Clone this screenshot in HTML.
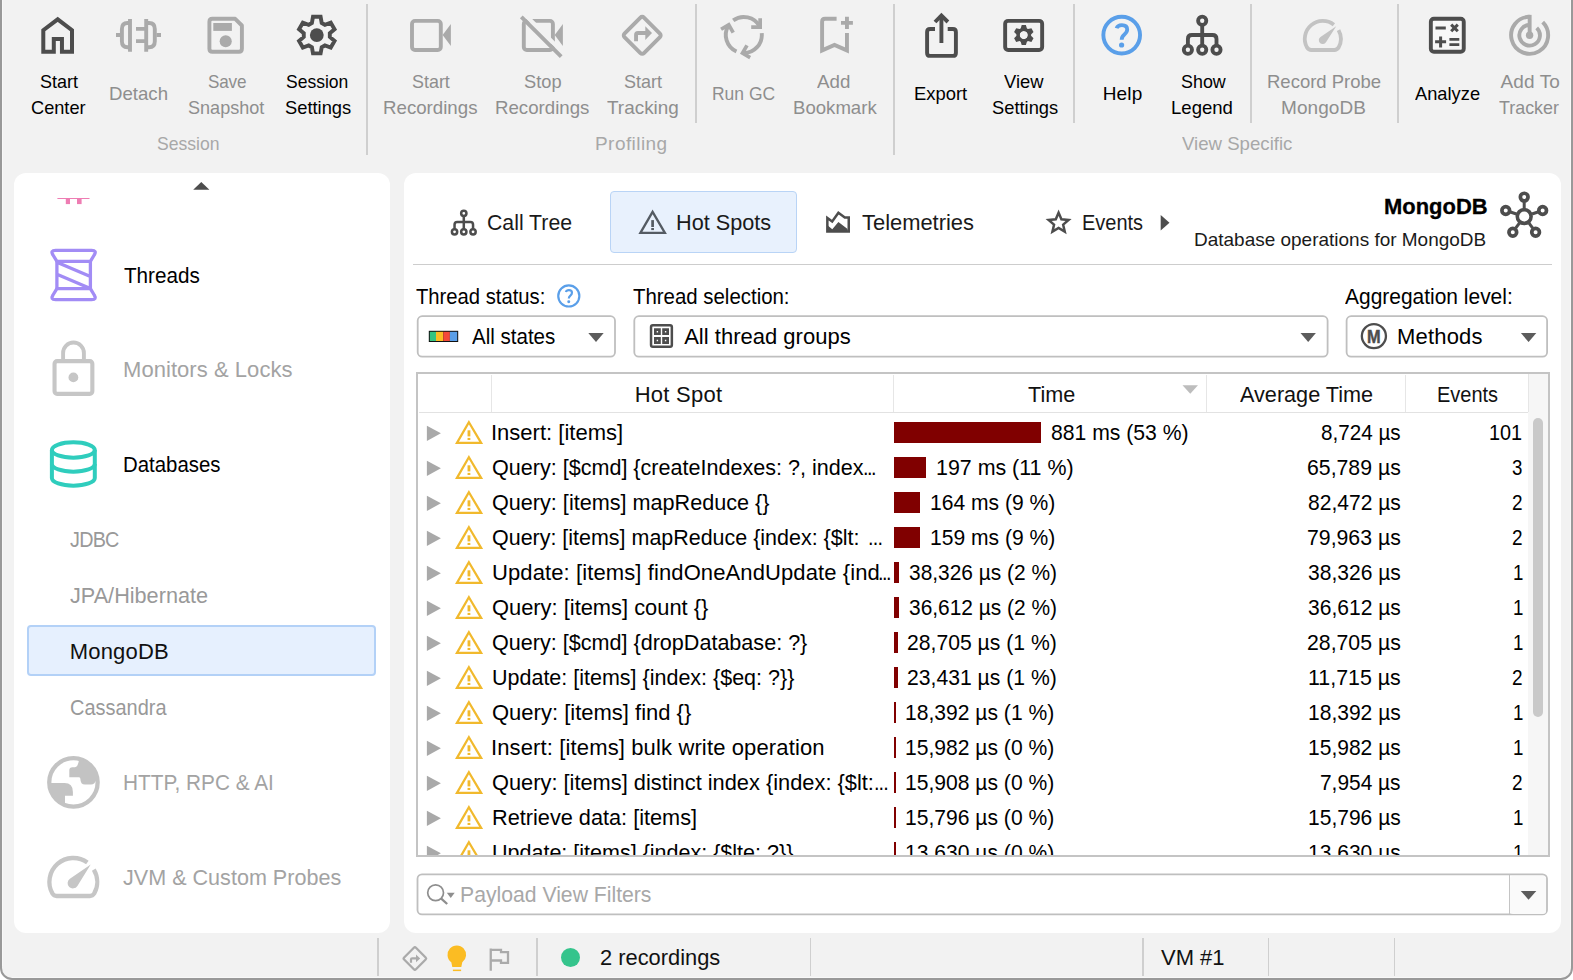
<!DOCTYPE html>
<html lang="en"><head><meta charset="utf-8"><title>JProfiler - MongoDB Hot Spots</title>
<style>
html,body{margin:0;padding:0;}
body{width:1573px;height:980px;overflow:hidden;background:#fff;font-family:"Liberation Sans", sans-serif;position:relative;}
.a{position:absolute;box-sizing:border-box;}
.t{position:absolute;white-space:pre;line-height:1;color:#000;transform-origin:0 0;}
</style></head><body>
<div class="a" style="left:0px;top:-20px;width:1573px;height:1000px;background:#f2f2f2;border:2px solid #999;border-radius:12px;"></div>
<div class="a" style="left:2px;top:0px;width:1px;height:966px;background:#f8f8f8;"></div>
<div class="a" style="left:1570px;top:0px;width:1px;height:966px;background:#f8f8f8;"></div>
<div class="a" style="left:12px;top:977px;width:1549px;height:1px;background:#f8f8f8;"></div>
<div class="a" style="left:366px;top:4px;width:2px;height:151px;background:#cfcfcf;"></div>
<div class="a" style="left:695px;top:4px;width:2px;height:119px;background:#cfcfcf;"></div>
<div class="a" style="left:893px;top:4px;width:2px;height:151px;background:#cfcfcf;"></div>
<div class="a" style="left:1073px;top:4px;width:2px;height:119px;background:#cfcfcf;"></div>
<div class="a" style="left:1250px;top:4px;width:2px;height:119px;background:#cfcfcf;"></div>
<div class="a" style="left:1397px;top:4px;width:2px;height:119px;background:#cfcfcf;"></div>
<div class="a" style="left:14px;top:173px;width:375.6px;height:760px;background:#fff;border-radius:12px;"></div>
<div class="a" style="left:404px;top:173px;width:1157px;height:760px;background:#fff;border-radius:12px;"></div>
<div class="a" style="left:27px;top:625px;width:349px;height:51px;background:#e6f0fe;border:2px solid #b3d1f7;border-radius:4px;"></div>
<div class="a" style="left:610px;top:190.5px;width:187px;height:62.5px;background:#e8f1fd;border:1px solid #b9d4f6;border-radius:4px;"></div>
<div class="a" style="left:413px;top:264px;width:1139px;height:1px;background:#cdcdcd;"></div>
<svg class="a" style="left:0;top:0" width="1573" height="980"><rect x="417.7" y="316.2" width="197.3" height="40.5" rx="4.5" fill="#fff" stroke="#bfbfbf" stroke-width="1.8"/></svg>
<svg class="a" style="left:0;top:0" width="1573" height="980"><rect x="634.3" y="316.2" width="693.3" height="40.5" rx="4.5" fill="#fff" stroke="#bfbfbf" stroke-width="1.8"/></svg>
<svg class="a" style="left:0;top:0" width="1573" height="980"><rect x="1346.6" y="316.2" width="200.5" height="40.5" rx="4.5" fill="#fff" stroke="#bfbfbf" stroke-width="1.8"/></svg>
<div class="a" style="left:416px;top:372px;width:1133.5px;height:485px;background:#fff;border:2px solid #c4c4c4;"></div>
<div class="a" style="left:419px;top:412px;width:1109px;height:1px;background:#e2e2e2;"></div>
<div class="a" style="left:490.5px;top:375px;width:1px;height:37px;background:#e6e6e6;"></div>
<div class="a" style="left:893px;top:375px;width:1px;height:37px;background:#e6e6e6;"></div>
<div class="a" style="left:1206px;top:375px;width:1px;height:37px;background:#e6e6e6;"></div>
<div class="a" style="left:1404.5px;top:375px;width:1px;height:37px;background:#e6e6e6;"></div>
<div class="a" style="left:1528px;top:374px;width:19.5px;height:481px;background:#f6f6f6;"></div>
<div class="a" style="left:1528px;top:374px;width:1px;height:38px;background:#e6e6e6;"></div>
<div class="a" style="left:1533px;top:417.5px;width:10px;height:299px;background:#c9c9c9;border-radius:5px;"></div>
<svg class="a" style="left:426px;top:425px" width="16" height="17" viewBox="0 0 16 17"><path d="M0.9 0.7 L14.9 8.35 L0.9 16 Z" fill="#a9a9a9"/></svg>
<svg class="a" style="left:453px;top:418px" width="32" height="28" viewBox="0 0 32 28"><path d="M15.9 4.25 L28.15 24.9 H3.95 Z" fill="none" stroke="#f1b92d" stroke-width="2.25" stroke-linejoin="miter"/><rect x="14.55" y="12.3" width="2.8" height="6.1" fill="#f1b92d"/><rect x="14.55" y="19.9" width="2.8" height="2.1" fill="#f1b92d"/></svg>
<div class="a" style="left:894px;top:421.8px;width:147px;height:21px;background:#800000;"></div>
<svg class="a" style="left:426px;top:460px" width="16" height="17" viewBox="0 0 16 17"><path d="M0.9 0.7 L14.9 8.35 L0.9 16 Z" fill="#a9a9a9"/></svg>
<svg class="a" style="left:453px;top:453px" width="32" height="28" viewBox="0 0 32 28"><path d="M15.9 4.25 L28.15 24.9 H3.95 Z" fill="none" stroke="#f1b92d" stroke-width="2.25" stroke-linejoin="miter"/><rect x="14.55" y="12.3" width="2.8" height="6.1" fill="#f1b92d"/><rect x="14.55" y="19.9" width="2.8" height="2.1" fill="#f1b92d"/></svg>
<div class="a" style="left:894px;top:456.8px;width:32px;height:21px;background:#800000;"></div>
<svg class="a" style="left:426px;top:495px" width="16" height="17" viewBox="0 0 16 17"><path d="M0.9 0.7 L14.9 8.35 L0.9 16 Z" fill="#a9a9a9"/></svg>
<svg class="a" style="left:453px;top:488px" width="32" height="28" viewBox="0 0 32 28"><path d="M15.9 4.25 L28.15 24.9 H3.95 Z" fill="none" stroke="#f1b92d" stroke-width="2.25" stroke-linejoin="miter"/><rect x="14.55" y="12.3" width="2.8" height="6.1" fill="#f1b92d"/><rect x="14.55" y="19.9" width="2.8" height="2.1" fill="#f1b92d"/></svg>
<div class="a" style="left:894px;top:491.8px;width:26px;height:21px;background:#800000;"></div>
<svg class="a" style="left:426px;top:530px" width="16" height="17" viewBox="0 0 16 17"><path d="M0.9 0.7 L14.9 8.35 L0.9 16 Z" fill="#a9a9a9"/></svg>
<svg class="a" style="left:453px;top:523px" width="32" height="28" viewBox="0 0 32 28"><path d="M15.9 4.25 L28.15 24.9 H3.95 Z" fill="none" stroke="#f1b92d" stroke-width="2.25" stroke-linejoin="miter"/><rect x="14.55" y="12.3" width="2.8" height="6.1" fill="#f1b92d"/><rect x="14.55" y="19.9" width="2.8" height="2.1" fill="#f1b92d"/></svg>
<div class="a" style="left:894px;top:526.8px;width:26px;height:21px;background:#800000;"></div>
<svg class="a" style="left:426px;top:565px" width="16" height="17" viewBox="0 0 16 17"><path d="M0.9 0.7 L14.9 8.35 L0.9 16 Z" fill="#a9a9a9"/></svg>
<svg class="a" style="left:453px;top:558px" width="32" height="28" viewBox="0 0 32 28"><path d="M15.9 4.25 L28.15 24.9 H3.95 Z" fill="none" stroke="#f1b92d" stroke-width="2.25" stroke-linejoin="miter"/><rect x="14.55" y="12.3" width="2.8" height="6.1" fill="#f1b92d"/><rect x="14.55" y="19.9" width="2.8" height="2.1" fill="#f1b92d"/></svg>
<div class="a" style="left:894px;top:561.8px;width:5px;height:21px;background:#800000;"></div>
<svg class="a" style="left:426px;top:600px" width="16" height="17" viewBox="0 0 16 17"><path d="M0.9 0.7 L14.9 8.35 L0.9 16 Z" fill="#a9a9a9"/></svg>
<svg class="a" style="left:453px;top:593px" width="32" height="28" viewBox="0 0 32 28"><path d="M15.9 4.25 L28.15 24.9 H3.95 Z" fill="none" stroke="#f1b92d" stroke-width="2.25" stroke-linejoin="miter"/><rect x="14.55" y="12.3" width="2.8" height="6.1" fill="#f1b92d"/><rect x="14.55" y="19.9" width="2.8" height="2.1" fill="#f1b92d"/></svg>
<div class="a" style="left:894px;top:596.8px;width:5px;height:21px;background:#800000;"></div>
<svg class="a" style="left:426px;top:635px" width="16" height="17" viewBox="0 0 16 17"><path d="M0.9 0.7 L14.9 8.35 L0.9 16 Z" fill="#a9a9a9"/></svg>
<svg class="a" style="left:453px;top:628px" width="32" height="28" viewBox="0 0 32 28"><path d="M15.9 4.25 L28.15 24.9 H3.95 Z" fill="none" stroke="#f1b92d" stroke-width="2.25" stroke-linejoin="miter"/><rect x="14.55" y="12.3" width="2.8" height="6.1" fill="#f1b92d"/><rect x="14.55" y="19.9" width="2.8" height="2.1" fill="#f1b92d"/></svg>
<div class="a" style="left:894px;top:631.8px;width:4px;height:21px;background:#800000;"></div>
<svg class="a" style="left:426px;top:670px" width="16" height="17" viewBox="0 0 16 17"><path d="M0.9 0.7 L14.9 8.35 L0.9 16 Z" fill="#a9a9a9"/></svg>
<svg class="a" style="left:453px;top:663px" width="32" height="28" viewBox="0 0 32 28"><path d="M15.9 4.25 L28.15 24.9 H3.95 Z" fill="none" stroke="#f1b92d" stroke-width="2.25" stroke-linejoin="miter"/><rect x="14.55" y="12.3" width="2.8" height="6.1" fill="#f1b92d"/><rect x="14.55" y="19.9" width="2.8" height="2.1" fill="#f1b92d"/></svg>
<div class="a" style="left:894px;top:666.8px;width:4px;height:21px;background:#800000;"></div>
<svg class="a" style="left:426px;top:705px" width="16" height="17" viewBox="0 0 16 17"><path d="M0.9 0.7 L14.9 8.35 L0.9 16 Z" fill="#a9a9a9"/></svg>
<svg class="a" style="left:453px;top:698px" width="32" height="28" viewBox="0 0 32 28"><path d="M15.9 4.25 L28.15 24.9 H3.95 Z" fill="none" stroke="#f1b92d" stroke-width="2.25" stroke-linejoin="miter"/><rect x="14.55" y="12.3" width="2.8" height="6.1" fill="#f1b92d"/><rect x="14.55" y="19.9" width="2.8" height="2.1" fill="#f1b92d"/></svg>
<div class="a" style="left:894px;top:701.8px;width:2.3px;height:21px;background:#800000;"></div>
<svg class="a" style="left:426px;top:740px" width="16" height="17" viewBox="0 0 16 17"><path d="M0.9 0.7 L14.9 8.35 L0.9 16 Z" fill="#a9a9a9"/></svg>
<svg class="a" style="left:453px;top:733px" width="32" height="28" viewBox="0 0 32 28"><path d="M15.9 4.25 L28.15 24.9 H3.95 Z" fill="none" stroke="#f1b92d" stroke-width="2.25" stroke-linejoin="miter"/><rect x="14.55" y="12.3" width="2.8" height="6.1" fill="#f1b92d"/><rect x="14.55" y="19.9" width="2.8" height="2.1" fill="#f1b92d"/></svg>
<div class="a" style="left:894px;top:736.8px;width:2.3px;height:21px;background:#800000;"></div>
<svg class="a" style="left:426px;top:775px" width="16" height="17" viewBox="0 0 16 17"><path d="M0.9 0.7 L14.9 8.35 L0.9 16 Z" fill="#a9a9a9"/></svg>
<svg class="a" style="left:453px;top:768px" width="32" height="28" viewBox="0 0 32 28"><path d="M15.9 4.25 L28.15 24.9 H3.95 Z" fill="none" stroke="#f1b92d" stroke-width="2.25" stroke-linejoin="miter"/><rect x="14.55" y="12.3" width="2.8" height="6.1" fill="#f1b92d"/><rect x="14.55" y="19.9" width="2.8" height="2.1" fill="#f1b92d"/></svg>
<div class="a" style="left:894px;top:771.8px;width:2.3px;height:21px;background:#800000;"></div>
<svg class="a" style="left:426px;top:810px" width="16" height="17" viewBox="0 0 16 17"><path d="M0.9 0.7 L14.9 8.35 L0.9 16 Z" fill="#a9a9a9"/></svg>
<svg class="a" style="left:453px;top:803px" width="32" height="28" viewBox="0 0 32 28"><path d="M15.9 4.25 L28.15 24.9 H3.95 Z" fill="none" stroke="#f1b92d" stroke-width="2.25" stroke-linejoin="miter"/><rect x="14.55" y="12.3" width="2.8" height="6.1" fill="#f1b92d"/><rect x="14.55" y="19.9" width="2.8" height="2.1" fill="#f1b92d"/></svg>
<div class="a" style="left:894px;top:806.8px;width:2.3px;height:21px;background:#800000;"></div>
<svg class="a" style="left:426px;top:845px" width="16" height="17" viewBox="0 0 16 17"><path d="M0.9 0.7 L14.9 8.35 L0.9 16 Z" fill="#a9a9a9"/></svg>
<svg class="a" style="left:453px;top:838px" width="32" height="28" viewBox="0 0 32 28"><path d="M15.9 4.25 L28.15 24.9 H3.95 Z" fill="none" stroke="#f1b92d" stroke-width="2.25" stroke-linejoin="miter"/><rect x="14.55" y="12.3" width="2.8" height="6.1" fill="#f1b92d"/><rect x="14.55" y="19.9" width="2.8" height="2.1" fill="#f1b92d"/></svg>
<div class="a" style="left:894px;top:841.8px;width:2.3px;height:21px;background:#800000;"></div>
<div class="a" style="left:416px;top:855px;width:1133.5px;height:2px;background:#c4c4c4;"></div>
<div class="a" style="left:405px;top:857px;width:1155px;height:16px;background:#fff;"></div>
<svg class="a" style="left:0;top:0" width="1573" height="980"><rect x="417.5" y="874.3" width="1129.5" height="40.10000000000002" rx="4.5" fill="#fff" stroke="#bfbfbf" stroke-width="1.8"/></svg>
<div class="a" style="left:1510px;top:875.5px;width:36px;height:38px;background:#fafafa;border-radius:3px;"></div>
<div class="a" style="left:1508.5px;top:875px;width:1.6px;height:39px;background:#c4c4c4;"></div>
<div class="a" style="left:377px;top:938px;width:1.5px;height:38px;background:#cfcfcf;"></div>
<div class="a" style="left:536px;top:938px;width:1.5px;height:38px;background:#cfcfcf;"></div>
<div class="a" style="left:809.5px;top:938px;width:1.5px;height:38px;background:#cfcfcf;"></div>
<div class="a" style="left:1142px;top:938px;width:1.5px;height:38px;background:#cfcfcf;"></div>
<div class="a" style="left:1267.5px;top:938px;width:1.5px;height:38px;background:#cfcfcf;"></div>
<div class="a" style="left:1393.5px;top:938px;width:1.5px;height:38px;background:#cfcfcf;"></div>
<div class="a" style="left:561px;top:948px;width:18.5px;height:18.5px;background:#35c48c;border-radius:10px;"></div>
<svg class="a" style="left:0;top:0" width="1573" height="980" viewBox="0 0 1573 980" fill="none">
<path d="M43.3 51.7 V30.2 L57.7 19.3 L72 30.2 V51.7 H61.95 V39.05 H53.8 V51.7 Z" stroke="#4d4d4d" stroke-width="4" stroke-linejoin="miter"/>
<g stroke="#aaaaaa" stroke-width="3.9" fill="none"><path d="M130 23 H127.5 Q121.9 23 121.9 29 V41.3 Q121.9 47.3 127.5 47.3 H130"/><path d="M146.5 23 H149.2 Q154.8 23 154.8 29 V41.3 Q154.8 47.3 149.2 47.3 H146.5"/><path d="M130 19 V51.8 M146.2 19 V51.8 M116 35.05 H120.5 M156.5 35.05 H161 M136 28.9 H145 M136 41.1 H145"/></g>
<path d="M212.4 18.8 H235.2 L241.9 25.5 V48.7 Q241.9 51.7 238.9 51.7 H212.4 Q209.4 51.7 209.4 48.7 V21.8 Q209.4 18.8 212.4 18.8 Z" stroke="#aaaaaa" stroke-width="3.9" stroke-linejoin="round"/><rect x="213.3" y="23" width="18.6" height="7.9" fill="#aaaaaa"/><circle cx="225.7" cy="41.3" r="6.05" fill="#aaaaaa"/>
<path d="M311.90 22.90 L313.00 16.80 L320.60 16.80 L321.70 22.90 L324.92 24.76 L330.75 22.66 L334.55 29.24 L329.82 33.24 L329.82 36.96 L334.55 40.96 L330.75 47.54 L324.92 45.44 L321.70 47.30 L320.60 53.40 L313.00 53.40 L311.90 47.30 L308.68 45.44 L302.85 47.54 L299.05 40.96 L303.78 36.96 L303.78 33.24 L299.05 29.24 L302.85 22.66 L308.68 24.76 Z" stroke="#4d4d4d" stroke-width="3.9" stroke-linejoin="miter"/><circle cx="316.8" cy="35.1" r="6.9" fill="#4d4d4d"/>
<rect x="412" y="20.9" width="28.8" height="29.1" rx="3" stroke="#aaaaaa" stroke-width="3.9"/><path d="M442.6 35 L450.9 24 V46 Z" fill="#aaaaaa"/>
<rect x="523.8" y="20.9" width="29.1" height="29.1" rx="3" stroke="#aaaaaa" stroke-width="3.9"/><path d="M554.7 35 L562.9 24 V46 Z" fill="#aaaaaa"/><path d="M524.2 13.9 L564.1 53.8" stroke="#f2f2f2" stroke-width="4.3"/><path d="M521.3 16.8 L561.2 56.7" stroke="#aaaaaa" stroke-width="3.9"/>
<rect x="628.4" y="21.5" width="27.6" height="27.6" rx="2.5" transform="rotate(45 642.2 35.3)" stroke="#aaaaaa" stroke-width="3.9"/><path d="M636.05 41.3 V35 Q636.05 33.05 638 33.05 H646" stroke="#aaaaaa" stroke-width="3.9"/><path d="M645.3 26.2 L652 33.1 L645.3 40 Z" fill="#aaaaaa"/>
<g><path d="M733.2 20.4 A18.1 18.1 0 0 1 759.6 26.3" stroke="#aaaaaa" stroke-width="3.9"/><path d="M760.15 18.2 V27.05 H751.2" stroke="#aaaaaa" stroke-width="3.7" stroke-linejoin="miter"/></g><g transform="rotate(120 743.8 35)"><path d="M733.2 20.4 A18.1 18.1 0 0 1 759.6 26.3" stroke="#aaaaaa" stroke-width="3.9"/><path d="M760.15 18.2 V27.05 H751.2" stroke="#aaaaaa" stroke-width="3.7" stroke-linejoin="miter"/></g><g transform="rotate(240 743.8 35)"><path d="M733.2 20.4 A18.1 18.1 0 0 1 759.6 26.3" stroke="#aaaaaa" stroke-width="3.9"/><path d="M760.15 18.2 V27.05 H751.2" stroke="#aaaaaa" stroke-width="3.7" stroke-linejoin="miter"/></g>
<path d="M836.6 18.75 H825.1 Q822.1 18.75 822.1 21.75 V50.4 L834.5 44.9 L846.95 50.4 V33.1" stroke="#aaaaaa" stroke-width="3.9" stroke-linejoin="miter" stroke-miterlimit="10"/><path d="M846.95 16.8 V28.9 M841 22.85 H852.9" stroke="#aaaaaa" stroke-width="3.9"/>
<path d="M935 29 H930.1 Q927.1 29 927.1 32 V52.9 Q927.1 55.9 930.1 55.9 H952.9 Q955.9 55.9 955.9 52.9 V32 Q955.9 29 952.9 29 H947.7" stroke="#4d4d4d" stroke-width="3.9"/><path d="M941.4 43 V16.5" stroke="#4d4d4d" stroke-width="3.9"/><path d="M935 22 L941.4 15.56 L947.9 22" stroke="#4d4d4d" stroke-width="3.9" stroke-linejoin="miter"/>
<rect x="1005.15" y="20.85" width="37" height="29.2" rx="3" stroke="#4d4d4d" stroke-width="3.9"/><path fill-rule="evenodd" fill="#4d4d4d" d="M1020.70 28.50 L1021.70 25.10 L1025.90 25.10 L1026.90 28.50 L1027.97 29.12 L1031.41 28.28 L1033.51 31.92 L1031.07 34.48 L1031.07 35.72 L1033.51 38.28 L1031.41 41.92 L1027.97 41.08 L1026.90 41.70 L1025.90 45.10 L1021.70 45.10 L1020.70 41.70 L1019.63 41.08 L1016.19 41.92 L1014.09 38.28 L1016.53 35.72 L1016.53 34.48 L1014.09 31.92 L1016.19 28.28 L1019.63 29.12 Z M1028 35.1 A4.2 4.2 0 1 0 1019.6 35.1 A4.2 4.2 0 1 0 1028 35.1 Z"/><circle cx="1023.8" cy="35.1" r="5.6" stroke="#4d4d4d" stroke-width="3"/>
<circle cx="1121.7" cy="35.1" r="18.35" stroke="#5a9fe9" stroke-width="3.9"/><path d="M1116.6 28.3 Q1117.6 25.1 1121.9 25.1 Q1127.2 25.1 1127.2 29.6 Q1127.2 32.2 1124.4 34.4 Q1121.7 36.6 1121.7 39.7" stroke="#5a9fe9" stroke-width="3.8"/><circle cx="1121.6" cy="45" r="2.6" fill="#5a9fe9"/>
<g stroke="#4d4d4d" stroke-width="3.85"><circle cx="1202.2" cy="20.8" r="4.1"/><circle cx="1187.9" cy="49.7" r="4.1"/><circle cx="1202.2" cy="49.7" r="4.1"/><circle cx="1216.5" cy="49.7" r="4.1"/><path d="M1202.2 25 V45.5 M1187.9 45.5 V39 Q1187.9 35 1191.9 35 H1212.5 Q1216.5 35 1216.5 39 V45.5"/></g>
<rect x="1430.85" y="18.75" width="32.9" height="33" rx="3" stroke="#4d4d4d" stroke-width="3.9" fill="#f7f7f7"/><path d="M1435.5 28 H1445.8 M1435.1 41.85 H1446.1 M1440.6 36.4 V47.4 M1451.2 24.6 L1457.8 31.2 M1457.8 24.6 L1451.2 31.2" stroke="#4d4d4d" stroke-width="3"/><path d="M1449.4 39.35 H1459.3 M1449.4 44.6 H1459.3" stroke="#4d4d4d" stroke-width="2.6"/>
<path d="M1529.65 16.8 A18.5 18.5 0 1 0 1542.7 22.2" stroke="#aaaaaa" stroke-width="3.9"/><path d="M1529.65 25 A10.3 10.3 0 1 0 1536.7 27.8" stroke="#aaaaaa" stroke-width="3.9"/><path d="M1529.65 14.85 V35" stroke="#aaaaaa" stroke-width="3.9"/><circle cx="1529.6" cy="35.3" r="3.7" fill="#aaaaaa"/>
<path d="M193.2 189.8 L201.3 181.9 L209.4 189.8 Z" fill="#4d4d4d"/>
<path d="M57.4 198.5 H89.5" stroke="#ee7db3" stroke-width="1"/><rect x="65.8" y="198.2" width="4.2" height="5.9" fill="#ee7db3"/><rect x="77" y="198.2" width="4.6" height="5.9" fill="#ee7db3"/>
<g stroke="#a28cf5" stroke-width="3.3" stroke-linejoin="round" stroke-linecap="round"><path d="M55.6 250.35 H91.6 Q97.2 250.35 94.2 255 L90.4 261.4 H56.9 L53 255 Q50 250.35 55.6 250.35 Z"/><path d="M55.6 299.65 H91.6 Q97.2 299.65 94.2 295 L90.4 288.6 H56.9 L53 295 Q50 299.65 55.6 299.65 Z"/><path d="M56.9 261.4 V288.6 M90.4 261.4 V288.6 M57.5 262.5 L89.8 276.3 M57.5 274.6 L89.8 288.2"/></g>
<rect x="54.55" y="361.15" width="37.8" height="32.7" rx="2.5" stroke="#c6c6c6" stroke-width="4.1"/><path d="M63.1 361 V352.9 A10.4 10.4 0 0 1 83.9 352.9 V361" stroke="#c6c6c6" stroke-width="3.9"/><circle cx="73.4" cy="377.4" r="4.9" fill="#c6c6c6"/>
<g stroke="#2fcdbd" stroke-width="4"><ellipse cx="73.35" cy="450" rx="21.45" ry="7.75"/><path d="M51.9 450 V477.9 A21.45 7.75 0 0 0 94.8 477.9 V450"/><path d="M51.9 464 A21.45 7.75 0 0 0 94.8 464"/></g>
<defs><clipPath id="gc"><circle cx="73.45" cy="782.35" r="24.5"/></clipPath></defs><circle cx="73.45" cy="782.35" r="24.2" stroke="#c3c3c3" stroke-width="4.3"/><g clip-path="url(#gc)" fill="#c3c3c3"><path d="M79.3 758 L78.6 762 Q77.4 767.2 75 767.2 H72.4 Q69.3 767.2 69.3 770.4 V777.2 H79 Q80.4 777.2 80.4 779 Q80.4 784.5 85 784.5 H91 Q95 784.5 96.5 779 L110 779 V750 H79 Z"/><path d="M45 783.1 H64.5 Q72.9 783.1 72.9 792 V795.8 H65 V812 H40 Z"/></g>
<path d="M87.35 862.56 A23.9 23.9 0 0 0 52.35 893.40 Q54.00 896.00 56.60 896.00 H90.00 Q92.60 896.00 94.25 893.40 A23.9 23.9 0 0 0 93.79 869.59" stroke="#c6c6c6" stroke-width="4.3" stroke-linejoin="round"/><path d="M90.7 864.5 L77.40 885.90 A5.3 5.3 0 1 1 69.91 878.73 Z" fill="#c6c6c6"/>
<path d="M1333.88 24.72 A18 18 0 0 0 1306.93 47.40 Q1308.63 50.00 1311.23 50.00 H1334.37 Q1336.97 50.00 1338.67 47.40 A18 18 0 0 0 1338.54 30.17" stroke="#c3c3c3" stroke-width="3.8" stroke-linejoin="round"/><path d="M1336.2 26.2 L1325.99 42.29 A3.9 3.9 0 1 1 1320.49 36.98 Z" fill="#c3c3c3"/>
<g stroke="#4d4d4d" stroke-width="2.5"><circle cx="463.8" cy="213.3" r="2.65"/><circle cx="454.55" cy="231.8" r="2.65"/><circle cx="463.8" cy="231.8" r="2.65"/><circle cx="473.05" cy="231.8" r="2.65"/><path d="M463.8 215.95000000000002 V229.15 M454.55 229.15 V224.7 Q454.55 222.1 457.15000000000003 222.1 H470.45 Q473.05 222.1 473.05 224.7 V229.15"/></g>
<path d="M652.6 211.9 L664.9 232.9 H640.4 Z" stroke="#545b63" stroke-width="2.3" stroke-linejoin="miter"/><rect x="651.25" y="220.1" width="2.7" height="6.9" fill="#545b63"/><rect x="651.25" y="228" width="2.7" height="2.1" fill="#545b63"/>
<path d="M827.35 231.55 V217.9 L832.2 221.5 L838.4 212.8 L844.8 217.45 H848.75 V231.55 Z" stroke="#4d4d4d" stroke-width="2.5" stroke-linejoin="miter" fill="none"/><path d="M827.4 225.3 L832.3 229.2 L838.4 222.1 L847.6 229 V231.6 H827.4 Z" fill="#4d4d4d"/>
<path d="M1058.60 212.70 L1061.42 219.32 L1068.59 219.96 L1063.17 224.68 L1064.77 231.69 L1058.60 228.00 L1052.43 231.69 L1054.03 224.68 L1048.61 219.96 L1055.78 219.32 Z" stroke="#4d4d4d" stroke-width="2.5" stroke-linejoin="miter" stroke-miterlimit="10"/>
<path d="M1160.7 215 L1169.5 222.75 L1160.7 230.5 Z" fill="#4d4d4d"/>
<g stroke="#4d4d4d"><circle cx="1524.2" cy="216.5" r="6.9" stroke-width="3.6"/><circle cx="1524.20" cy="197.10" r="3.85" stroke-width="3.7"/><path d="M1524.20 208.30 L1524.20 202.00" stroke-width="3"/><circle cx="1542.65" cy="210.51" r="3.85" stroke-width="3.7"/><path d="M1532.00 213.97 L1537.99 212.02" stroke-width="3"/><circle cx="1535.60" cy="232.19" r="3.85" stroke-width="3.7"/><path d="M1529.02 223.13 L1532.72 228.23" stroke-width="3"/><circle cx="1512.80" cy="232.19" r="3.85" stroke-width="3.7"/><path d="M1519.38 223.13 L1515.68 228.23" stroke-width="3"/><circle cx="1505.75" cy="210.51" r="3.85" stroke-width="3.7"/><path d="M1516.40 213.97 L1510.41 212.02" stroke-width="3"/></g>
<g transform="translate(568.8 295.95) scale(0.575)"><circle cx="0" cy="0" r="18.35" stroke="#5a9fe9" stroke-width="3.8"/><path d="M-5.1 -6.8 Q-4.1 -10 0.2 -10 Q5.5 -10 5.5 -5.5 Q5.5 -2.9 2.7 -0.7 Q0 1.5 0 4.6" stroke="#5a9fe9" stroke-width="3.8"/><circle cx="-0.1" cy="9.9" r="2.6" fill="#5a9fe9"/></g>
<rect x="428.8" y="330.8" width="29.4" height="11.2" fill="#111"/><rect x="429.8" y="331.8" width="6.2" height="9.2" fill="#33c481"/><rect x="436" y="331.8" width="7.3" height="9.2" fill="#fbbc23"/><rect x="443.3" y="331.8" width="6.6" height="9.2" fill="#f4483a"/><rect x="449.9" y="331.8" width="7.3" height="9.2" fill="#5a9ee8"/>
<path d="M588.3 333.1 H603.6999999999999 L596.0 342 Z" fill="#5c5c5c"/>
<path d="M1300.5 333.1 H1315.9 L1308.2 342 Z" fill="#5c5c5c"/>
<path d="M1520.9 333.1 H1536.3000000000002 L1528.6000000000001 342 Z" fill="#5c5c5c"/>
<path d="M1520.8 890.9 H1536.3 L1528.55 899.8 Z" fill="#5c5c5c"/>
<rect x="651.05" y="325.25" width="20.8" height="21.6" rx="1.8" stroke="#4d4d4d" stroke-width="2.5"/>
<path fill-rule="evenodd" fill="#4d4d4d" d="M654 328.3 h6.8 v6.8 h-6.8 Z M656.7 331.0 v1.4 h1.4 v-1.4 Z"/>
<path fill-rule="evenodd" fill="#4d4d4d" d="M654 337.1 h6.8 v6.8 h-6.8 Z M656.7 339.8 v1.4 h1.4 v-1.4 Z"/>
<path fill-rule="evenodd" fill="#4d4d4d" d="M662.2 328.3 h6.8 v6.8 h-6.8 Z M664.9000000000001 331.0 v1.4 h1.4 v-1.4 Z"/>
<path fill-rule="evenodd" fill="#4d4d4d" d="M662.2 337.1 h6.8 v6.8 h-6.8 Z M664.9000000000001 339.8 v1.4 h1.4 v-1.4 Z"/>
<circle cx="1373.9" cy="336.1" r="12.05" stroke="#4d4d4d" stroke-width="2.3"/><text x="1373.9" y="342.9" text-anchor="middle" font-family="Liberation Sans, sans-serif" font-weight="700" font-size="18.4" fill="#4d4d4d" stroke="#4d4d4d" stroke-width="0.45" textLength="13.6" lengthAdjust="spacingAndGlyphs">M</text>
<path d="M1182.5 385.3 H1198 L1190.25 393.8 Z" fill="#bdbdbd"/>
<circle cx="435.6" cy="892.8" r="7.9" stroke="#8e8e8e" stroke-width="1.7"/><path d="M441 898.4 L447.2 904" stroke="#8e8e8e" stroke-width="2.3"/><path d="M446.8 892.8 H454.7 L450.75 897.9 Z" fill="#8e8e8e"/>
<rect x="406.55" y="950.15" width="16.7" height="16.7" rx="1.5" transform="rotate(45 414.9 958.5)" stroke="#aaaaaa" stroke-width="2.3"/><path d="M411 962.8 V959.6 Q411 958.4 412.2 958.4 H416.5" stroke="#aaaaaa" stroke-width="2.2"/><path d="M416 954.6 L420.2 958.4 L416 962.2 Z" fill="#aaaaaa"/>
<path d="M452.3 966.9 L451.3 962.3 A9.3 9.3 0 1 1 462.3 962.3 L461.3 966.9 Z" fill="#fbbc23"/><rect x="452.9" y="969.6" width="8.2" height="1.5" fill="#fbbc23"/>
<path d="M490.75 948.6 V970.7 M490.75 949.8 H501 V952.2 H508 V962.9 H501 V960.5 H490.75" stroke="#aaaaaa" stroke-width="2.3" stroke-linejoin="miter"/>
</svg>
<span class="t" style="left:39.50px;top:72px;font-size:19px;transform:scaleX(0.9475);">Start</span>
<span class="t" style="left:30.50px;top:98px;font-size:19px;transform:scaleX(0.9567);">Center</span>
<span class="t" style="left:109.02px;top:84px;font-size:19px;transform:scaleX(0.9807);color:#8e8e8e;">Detach</span>
<span class="t" style="left:207.50px;top:72px;font-size:19px;letter-spacing:-0.173px;transform:scaleX(0.9000);color:#8e8e8e;">Save</span>
<span class="t" style="left:188.00px;top:98px;font-size:19px;transform:scaleX(0.9505);color:#8e8e8e;">Snapshot</span>
<span class="t" style="left:285.70px;top:72px;font-size:19px;transform:scaleX(0.9220);">Session</span>
<span class="t" style="left:285.00px;top:98px;font-size:19px;transform:scaleX(0.9640);">Settings</span>
<span class="t" style="left:156.70px;top:134px;font-size:19px;transform:scaleX(0.9250);color:#a8a8a8;">Session</span>
<span class="t" style="left:411.50px;top:72px;font-size:19px;transform:scaleX(0.9426);color:#8e8e8e;">Start</span>
<span class="t" style="left:382.72px;top:98px;font-size:19px;transform:scaleX(0.9830);color:#8e8e8e;">Recordings</span>
<span class="t" style="left:523.60px;top:72px;font-size:19px;transform:scaleX(0.9606);color:#8e8e8e;">Stop</span>
<span class="t" style="left:494.72px;top:98px;font-size:19px;transform:scaleX(0.9820);color:#8e8e8e;">Recordings</span>
<span class="t" style="left:623.60px;top:72px;font-size:19px;transform:scaleX(0.9475);color:#8e8e8e;">Start</span>
<span class="t" style="left:607.30px;top:98px;font-size:19px;transform:scaleX(0.9960);color:#8e8e8e;">Tracking</span>
<span class="t" style="left:595.00px;top:134px;font-size:19px;letter-spacing:0.440px;color:#a8a8a8;">Profiling</span>
<span class="t" style="left:712.08px;top:84px;font-size:19px;transform:scaleX(0.9191);color:#8e8e8e;">Run GC</span>
<span class="t" style="left:817.40px;top:72px;font-size:19px;transform:scaleX(0.9868);color:#8e8e8e;">Add</span>
<span class="t" style="left:793.22px;top:98px;font-size:19px;transform:scaleX(0.9785);color:#8e8e8e;">Bookmark</span>
<span class="t" style="left:913.93px;top:84px;font-size:19px;transform:scaleX(0.9683);">Export</span>
<span class="t" style="left:1003.80px;top:72px;font-size:19px;transform:scaleX(0.9655);">View</span>
<span class="t" style="left:991.60px;top:98px;font-size:19px;transform:scaleX(0.9640);">Settings</span>
<span class="t" style="left:1102.70px;top:84px;font-size:19px;letter-spacing:0.164px;">Help</span>
<span class="t" style="left:1180.70px;top:72px;font-size:19px;transform:scaleX(0.9413);">Show</span>
<span class="t" style="left:1171.02px;top:98px;font-size:19px;transform:scaleX(0.9768);">Legend</span>
<span class="t" style="left:1267.03px;top:72px;font-size:19px;transform:scaleX(0.9735);color:#8e8e8e;">Record Probe</span>
<span class="t" style="left:1281.00px;top:98px;font-size:19px;letter-spacing:0.081px;color:#8e8e8e;">MongoDB</span>
<span class="t" style="left:1181.70px;top:134px;font-size:19px;transform:scaleX(0.9800);color:#a8a8a8;">View Specific</span>
<span class="t" style="left:1414.70px;top:84px;font-size:19px;transform:scaleX(0.9623);">Analyze</span>
<span class="t" style="left:1500.50px;top:72px;font-size:19px;letter-spacing:0.103px;color:#8e8e8e;">Add To</span>
<span class="t" style="left:1499.30px;top:98px;font-size:19px;transform:scaleX(0.9400);color:#8e8e8e;">Tracker</span>
<span class="t" style="left:124.00px;top:265px;font-size:22px;transform:scaleX(0.9392);">Threads</span>
<span class="t" style="left:123.00px;top:359px;font-size:22px;letter-spacing:0.051px;color:#a3a3a3;">Monitors &amp; Locks</span>
<span class="t" style="left:123.07px;top:454px;font-size:22px;transform:scaleX(0.9263);">Databases</span>
<span class="t" style="left:70.00px;top:529px;font-size:22px;letter-spacing:-0.854px;transform:scaleX(0.9000);color:#999;">JDBC</span>
<span class="t" style="left:70.20px;top:585px;font-size:22px;transform:scaleX(0.9844);color:#999;">JPA/Hibernate</span>
<span class="t" style="left:69.70px;top:641px;font-size:22px;letter-spacing:0.191px;color:#111;">MongoDB</span>
<span class="t" style="left:69.79px;top:697px;font-size:22px;transform:scaleX(0.9072);color:#999;">Cassandra</span>
<span class="t" style="left:123.26px;top:772px;font-size:22px;transform:scaleX(0.9443);color:#a3a3a3;">HTTP, RPC &amp; AI</span>
<span class="t" style="left:123.00px;top:867px;font-size:22px;transform:scaleX(0.9806);color:#a3a3a3;">JVM &amp; Custom Probes</span>
<span class="t" style="left:486.53px;top:212px;font-size:22px;transform:scaleX(0.9657);color:#1a1a1a;">Call Tree</span>
<span class="t" style="left:676.01px;top:212px;font-size:22px;transform:scaleX(0.9853);color:#1a1a1a;">Hot Spots</span>
<span class="t" style="left:861.70px;top:212px;font-size:22px;transform:scaleX(0.9957);color:#1a1a1a;">Telemetries</span>
<span class="t" style="left:1082.09px;top:212px;font-size:22px;transform:scaleX(0.9086);color:#1a1a1a;">Events</span>
<span class="t" style="left:1383.50px;top:196px;font-size:22px;transform:scaleX(0.9974);font-weight:700;-webkit-text-stroke:0.3px #000;">MongoDB</span>
<span class="t" style="left:1194.00px;top:230px;font-size:19px;transform:scaleX(0.9987);color:#1a1a1a;">Database operations for MongoDB</span>
<span class="t" style="left:416.20px;top:286px;font-size:22px;transform:scaleX(0.9196);">Thread status:</span>
<span class="t" style="left:633.00px;top:286px;font-size:22px;transform:scaleX(0.9275);">Thread selection:</span>
<span class="t" style="left:1345.00px;top:286px;font-size:22px;transform:scaleX(0.9525);">Aggregation level:</span>
<span class="t" style="left:471.70px;top:326px;font-size:22px;transform:scaleX(0.9333);">All states</span>
<span class="t" style="left:684.20px;top:326px;font-size:22px;letter-spacing:0.011px;">All thread groups</span>
<span class="t" style="left:1397.00px;top:326px;font-size:22px;letter-spacing:0.187px;">Methods</span>
<span class="t" style="left:634.70px;top:384px;font-size:22px;letter-spacing:0.258px;color:#111;">Hot Spot</span>
<span class="t" style="left:1027.50px;top:384px;font-size:22px;transform:scaleX(0.9825);color:#111;">Time</span>
<span class="t" style="left:1240.00px;top:384px;font-size:22px;transform:scaleX(0.9831);color:#111;">Average Time</span>
<span class="t" style="left:1437.09px;top:384px;font-size:22px;transform:scaleX(0.9086);color:#111;">Events</span>
<span class="t" style="left:491.00px;top:422px;font-size:22px;letter-spacing:0.006px;">Insert: [items]</span>
<span class="t" style="left:1050.70px;top:422px;font-size:22px;transform:scaleX(0.9617);">881 ms (53 %)</span>
<span class="t" style="left:1320.70px;top:422px;font-size:22px;transform:scaleX(0.9382);">8,724 µs</span>
<span class="t" style="left:1489.10px;top:422px;font-size:22px;transform:scaleX(0.9022);">101</span>
<span class="t" style="left:492.02px;top:457px;font-size:22px;transform:scaleX(0.9799);">Query: [$cmd] {createIndexes: ?, index</span>
<span class="t" style="left:863.00px;top:457px;font-size:22px;letter-spacing:-1.600px;transform:scaleX(0.9000);">...</span>
<span class="t" style="left:935.73px;top:457px;font-size:22px;transform:scaleX(0.9727);">197 ms (11 %)</span>
<span class="t" style="left:1306.53px;top:457px;font-size:22px;transform:scaleX(0.9659);">65,789 µs</span>
<span class="t" style="left:1512.40px;top:457px;font-size:22px;transform:scaleX(0.8500);">3</span>
<span class="t" style="left:492.02px;top:492px;font-size:22px;transform:scaleX(0.9825);">Query: [items] mapReduce {}</span>
<span class="t" style="left:929.74px;top:492px;font-size:22px;transform:scaleX(0.9573);">164 ms (9 %)</span>
<span class="t" style="left:1307.50px;top:492px;font-size:22px;transform:scaleX(0.9559);">82,472 µs</span>
<span class="t" style="left:1511.64px;top:492px;font-size:22px;transform:scaleX(0.8636);">2</span>
<span class="t" style="left:492.02px;top:527px;font-size:22px;transform:scaleX(0.9754);">Query: [items] mapReduce {index: {$lt:</span>
<span class="t" style="left:867.70px;top:527px;font-size:22px;letter-spacing:-0.835px;transform:scaleX(0.9000);">...</span>
<span class="t" style="left:929.74px;top:527px;font-size:22px;transform:scaleX(0.9573);">159 ms (9 %)</span>
<span class="t" style="left:1306.53px;top:527px;font-size:22px;transform:scaleX(0.9659);">79,963 µs</span>
<span class="t" style="left:1511.64px;top:527px;font-size:22px;transform:scaleX(0.8636);">2</span>
<span class="t" style="left:492.00px;top:562px;font-size:22px;letter-spacing:0.106px;">Update: [items] findOneAndUpdate {ind</span>
<span class="t" style="left:878.40px;top:562px;font-size:22px;letter-spacing:-1.600px;transform:scaleX(0.9000);">...</span>
<span class="t" style="left:908.70px;top:562px;font-size:22px;transform:scaleX(0.9506);">38,326 µs (2 %)</span>
<span class="t" style="left:1307.50px;top:562px;font-size:22px;transform:scaleX(0.9559);">38,326 µs</span>
<span class="t" style="left:1512.73px;top:562px;font-size:22px;transform:scaleX(0.8500);">1</span>
<span class="t" style="left:492.01px;top:597px;font-size:22px;transform:scaleX(0.9939);">Query: [items] count {}</span>
<span class="t" style="left:908.70px;top:597px;font-size:22px;transform:scaleX(0.9506);">36,612 µs (2 %)</span>
<span class="t" style="left:1307.50px;top:597px;font-size:22px;transform:scaleX(0.9559);">36,612 µs</span>
<span class="t" style="left:1512.73px;top:597px;font-size:22px;transform:scaleX(0.8500);">1</span>
<span class="t" style="left:492.02px;top:632px;font-size:22px;transform:scaleX(0.9804);">Query: [$cmd] {dropDatabase: ?}</span>
<span class="t" style="left:906.54px;top:632px;font-size:22px;transform:scaleX(0.9614);">28,705 µs (1 %)</span>
<span class="t" style="left:1306.53px;top:632px;font-size:22px;transform:scaleX(0.9659);">28,705 µs</span>
<span class="t" style="left:1512.73px;top:632px;font-size:22px;transform:scaleX(0.8500);">1</span>
<span class="t" style="left:492.02px;top:667px;font-size:22px;transform:scaleX(0.9770);">Update: [items] {index: {$eq: ?}}</span>
<span class="t" style="left:906.54px;top:667px;font-size:22px;transform:scaleX(0.9614);">23,431 µs (1 %)</span>
<span class="t" style="left:1307.53px;top:667px;font-size:22px;transform:scaleX(0.9720);">11,715 µs</span>
<span class="t" style="left:1511.64px;top:667px;font-size:22px;transform:scaleX(0.8636);">2</span>
<span class="t" style="left:492.00px;top:702px;font-size:22px;">Query: [items] find {}</span>
<span class="t" style="left:905.04px;top:702px;font-size:22px;transform:scaleX(0.9581);">18,392 µs (1 %)</span>
<span class="t" style="left:1307.54px;top:702px;font-size:22px;transform:scaleX(0.9555);">18,392 µs</span>
<span class="t" style="left:1512.73px;top:702px;font-size:22px;transform:scaleX(0.8500);">1</span>
<span class="t" style="left:491.00px;top:737px;font-size:22px;letter-spacing:0.132px;">Insert: [items] bulk write operation</span>
<span class="t" style="left:905.04px;top:737px;font-size:22px;transform:scaleX(0.9581);">15,982 µs (0 %)</span>
<span class="t" style="left:1307.54px;top:737px;font-size:22px;transform:scaleX(0.9555);">15,982 µs</span>
<span class="t" style="left:1512.73px;top:737px;font-size:22px;transform:scaleX(0.8500);">1</span>
<span class="t" style="left:492.01px;top:772px;font-size:22px;transform:scaleX(0.9915);">Query: [items] distinct index {index: {$lt:</span>
<span class="t" style="left:873.80px;top:772px;font-size:22px;letter-spacing:-1.001px;transform:scaleX(0.9000);">...</span>
<span class="t" style="left:905.04px;top:772px;font-size:22px;transform:scaleX(0.9581);">15,908 µs (0 %)</span>
<span class="t" style="left:1319.75px;top:772px;font-size:22px;transform:scaleX(0.9494);">7,954 µs</span>
<span class="t" style="left:1511.64px;top:772px;font-size:22px;transform:scaleX(0.8636);">2</span>
<span class="t" style="left:492.01px;top:807px;font-size:22px;transform:scaleX(0.9866);">Retrieve data: [items]</span>
<span class="t" style="left:905.04px;top:807px;font-size:22px;transform:scaleX(0.9581);">15,796 µs (0 %)</span>
<span class="t" style="left:1307.54px;top:807px;font-size:22px;transform:scaleX(0.9555);">15,796 µs</span>
<span class="t" style="left:1512.73px;top:807px;font-size:22px;transform:scaleX(0.8500);">1</span>
<span class="t" style="left:459.74px;top:884px;font-size:22px;transform:scaleX(0.9626);color:#a8a8a8;">Payload View Filters</span>
<span class="t" style="left:599.71px;top:947px;font-size:22px;transform:scaleX(0.9936);color:#111;">2 recordings</span>
<span class="t" style="left:1161.00px;top:947px;font-size:22px;color:#111;">VM #1</span>
<div class="a" style="left:419px;top:374px;width:1109px;height:481px;overflow:hidden"><span class="t" style="left:73.02px;top:468px;font-size:22px;transform:scaleX(0.9777);">Update: [items] {index: {$lte: ?}}</span><span class="t" style="left:486.04px;top:468px;font-size:22px;transform:scaleX(0.9581);">13,630 µs (0 %)</span><span class="t" style="left:888.54px;top:468px;font-size:22px;transform:scaleX(0.9555);">13,630 µs</span><span class="t" style="left:1093.73px;top:468px;font-size:22px;transform:scaleX(0.8500);">1</span></div>
</body></html>
